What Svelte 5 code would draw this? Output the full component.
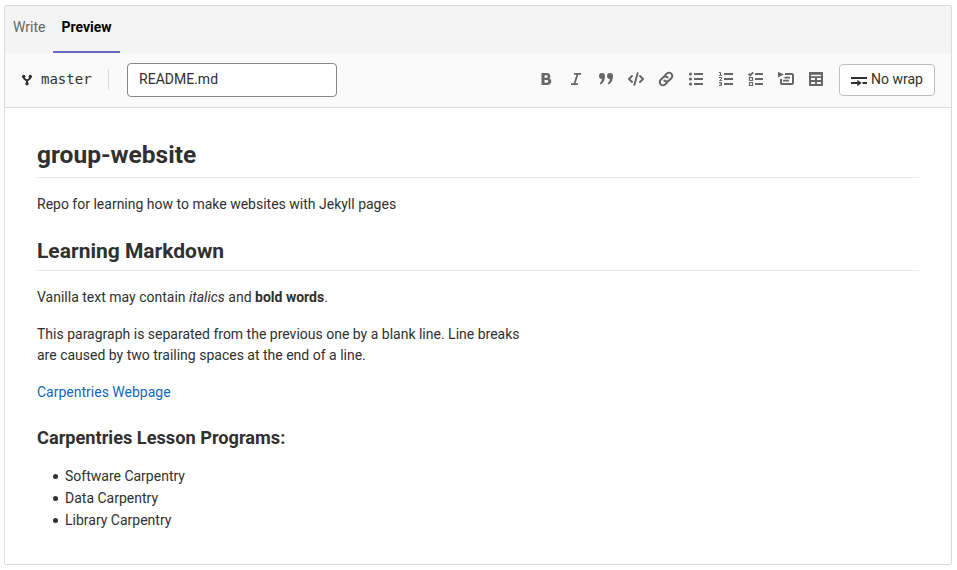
<script>
  const lessons = ['Software Carpentry', 'Data Carpentry', 'Library Carpentry'];
  const tools = ['bold', 'italic', 'quote', 'code', 'link', 'bullets', 'numbers', 'tasks', 'details', 'table'];
</script>

{#snippet icon(name)}
  <svg width="16" height="16" viewBox="0 0 16 16" fill="none" stroke="currentColor" stroke-width="2" aria-hidden="true">
    {#if name === 'bold'}
      <path fill="currentColor" stroke="none" fill-rule="evenodd" d="M3.500 2H9a3.300 3.300 0 0 1 2.500 5.500A3.500 3.500 0 0 1 9.500 14h-6zm3 2.300v2.500h2a1.250 1.250 0 0 0 0-2.500zm0 4.700v2.700H9a1.350 1.350 0 0 0 0-2.700z" />
    {:else if name === 'italic'}
      <path stroke-width="1.800" d="M6 2.900h7M3 13.100h7M9.600 3 6.400 13" />
    {:else if name === 'quote'}
      <path fill="currentColor" stroke="none" d="M4 2a3 3 0 0 1 3 3c0 4-1.700 7.300-4.500 8.500L1.800 12C3 11 3.800 9.400 4 8a3 3 0 0 1 0-6zm8 0a3 3 0 0 1 3 3c0 4-1.700 7.300-4.500 8.500L9.800 12c1.200-1 2-2.600 2.200-4a3 3 0 0 1 0-6z" />
    {:else if name === 'code'}
      <path stroke-width="1.900" stroke-linecap="round" stroke-linejoin="round" d="M4 5 1 8l3 3M12 5l3 3-3 3M9.600 2.200 6.400 13.800" />
    {:else if name === 'link'}
      <path stroke-linecap="round" d="m7.100 4.200 1.600-1.600a3.200 3.200 0 0 1 4.600 4.600L11 9.500a3.200 3.200 0 0 1-4.600 0M8.900 11.800l-1.600 1.600a3.200 3.200 0 0 1-4.600-4.600L5 6.500a3.200 3.200 0 0 1 4.600 0" />
    {:else if name === 'bullets'}
      <path d="M6 3h9M6 8h9M6 13h9" />
      <g fill="currentColor" stroke="none"><circle cx="2.500" cy="3" r="1.600" /><circle cx="2.500" cy="8" r="1.600" /><circle cx="2.500" cy="13" r="1.600" /></g>
    {:else if name === 'numbers'}
      <path d="M6 3h9M6 8h9M6 13h9" />
      <path stroke-width="1" d="M1 1.500h1.500v3M1 4.500h3M1 6.500h2.500V8L1.500 9.500H4M1 11.500h2.500v3H1M1.500 13h2" />
    {:else if name === 'tasks'}
      <path d="M7 3h8M7 8h8M7 13h8" />
      <path stroke-width="1.200" d="M1.500 6.500h3v3h-3zM1.500 11.500h3v3h-3z" />
      <path stroke-width="1.900" d="m.6 2.700 1.600 1.600L5.200 1.300" />
    {:else if name === 'details'}
      <path fill="currentColor" stroke="none" d="M0 .8 5.800 3.500 0 6.400z" />
      <path stroke-linejoin="round" d="M7 3h7a1 1 0 0 1 1 1v8a1 1 0 0 1-1 1H4a1 1 0 0 1-1-1V8" />
      <path stroke-width="1.700" d="M6.500 6.600H12M5 9.700h6" />
    {:else if name === 'table'}
      <path fill="currentColor" stroke="none" fill-rule="evenodd" d="M1 1h14v14H1zm2 2.700v1.600h10V3.700zM3 7v2h4V7zm6 0v2h4V7zm-6 4v2h4v-2zm6 0v2h4v-2z" />
    {/if}
  </svg>
{/snippet}

<main>
  <nav>
    <button class="tab">Write</button>
    <button class="tab active">Preview</button>
  </nav>
  <header>
    <svg class="branch" width="12" height="12" viewBox="0 0 12 12" fill="none" stroke="currentColor" stroke-width="2" aria-hidden="true">
      <path d="M2.700 2.500v1C2.700 5.500 6 5.500 6 7.100V10M9.300 2.500v1C9.300 5.500 6 5.500 6 7.100" />
      <g fill="currentColor" stroke="none"><circle cx="2.700" cy="2.500" r="1.700" /><circle cx="9.300" cy="2.500" r="1.700" /><circle cx="6" cy="9.800" r="1.700" /></g>
    </svg>
    <span class="ref"><span>master</span></span>
    <input value="README.md" aria-label="File name" />
    <div class="tools">
      {#each tools as name}
        <button class="tool" aria-label={name}>{@render icon(name)}</button>
      {/each}
    </div>
    <button class="wrap">
      <svg width="16" height="16" viewBox="0 0 16 16" fill="none" stroke="currentColor" stroke-width="2" aria-hidden="true">
        <path d="M0 5h16M0 10h8M11.500 10H16" />
        <path fill="currentColor" stroke="none" d="M6.300 6.800 10.700 10l-4.400 3.200z" />
      </svg>
      <span>No wrap</span>
    </button>
  </header>
  <article>
    <h1>group-website</h1>
    <p>Repo for learning how to make websites with Jekyll pages</p>
    <h2>Learning Markdown</h2>
    <p>Vanilla text may contain <em>italics</em> and <strong>bold words</strong>.</p>
    <p>This paragraph is separated from the previous one by a blank line. Line breaks<br />are caused by two trailing spaces at the end of a line.</p>
    <p><a href="#carpentries">Carpentries Webpage</a></p>
    <h3>Carpentries Lesson Programs:</h3>
    <ul>
      {#each lessons as lesson}<li>{lesson}</li>{/each}
    </ul>
  </article>
</main>

<style>
  :global(body) { background: #fff; }
  main {
    box-sizing: border-box;
    width: 948px;
    height: 560px;
    margin: 5px 0 0 4px;
    border: 1px solid #dbdbdb;
    border-radius: 2px;
    font-family: Roboto, "Noto Sans", sans-serif;
    font-size: 14px;
    color: #303030;
    overflow: hidden;
  }
  button, input { font: inherit; color: inherit; box-sizing: border-box; }
  button { border: 0; padding: 0; background: none; }
  nav { display: flex; height: 47px; background: #f4f4f4; }
  .tab { padding: 0 8px 5px; height: 47px; color: #666; }
  .active { font-weight: 700; color: #000; padding-bottom: 3px; border-bottom: 2px solid #6666c4; }
  header {
    display: flex;
    align-items: center;
    height: 54px;
    background: #fafafa;
    border-bottom: 1px solid #dbdbdb;
  }
  .branch { margin: 0 0 1px 16px; }
  .ref {
    display: flex;
    font-family: "DejaVu Sans Mono", monospace;
    font-size: 14px;
    line-height: 21px;
    height: 21px;
    margin: 0 0 2px 8px;
    padding-right: 16px;
    border-right: 1px solid #dbdbdb;
  }
  input {
    width: 210px;
    height: 34px;
    margin-left: 18px;
    padding: 0 11px 2px 11.500px;
    background: #fff;
    border: 1px solid #868686;
    border-radius: 4px;
  }
  .tools { display: flex; margin: 0 0 2px auto; gap: 6px; color: #666; }
  .tool { width: 24px; height: 24px; display: grid; place-items: center; }
  .wrap {
    display: flex;
    align-items: center;
    gap: 4px;
    width: 96px;
    height: 32px;
    margin: 0 16px 0 11px;
    padding-left: 11px;
    background: #fff;
    border: 1px solid #bfbfbf;
    border-radius: 4px;
  }
  .wrap svg { margin-top: 2px; }
  .wrap span { margin-top: -2px; }
  article { padding: 32px; }
  h1, h2, h3 { font-weight: 700; margin: 0; }
  h1 { font-size: 24.500px; line-height: 30px; padding-bottom: 7px; margin-bottom: 16px; border-bottom: 1px solid #eaeaea; }
  h2 { font-size: 21px; line-height: 26px; margin: 23px 0 16px; padding-bottom: 6px; border-bottom: 1px solid #eaeaea; }
  h3 { font-size: 18.200px; line-height: 22px; margin: 24px 0 16px; }
  p { margin: 0 0 16px; line-height: 21px; }
  a { color: #1068bf; text-decoration: none; }
  ul { margin: 0; padding-left: 15.500px; line-height: 22px; list-style: none; }
  li { display: flex; align-items: center; gap: 7px; }
  li::before { content: ""; width: 5.500px; height: 5.500px; margin-top: 1px; border-radius: 50%; background: #303030; }
</style>
